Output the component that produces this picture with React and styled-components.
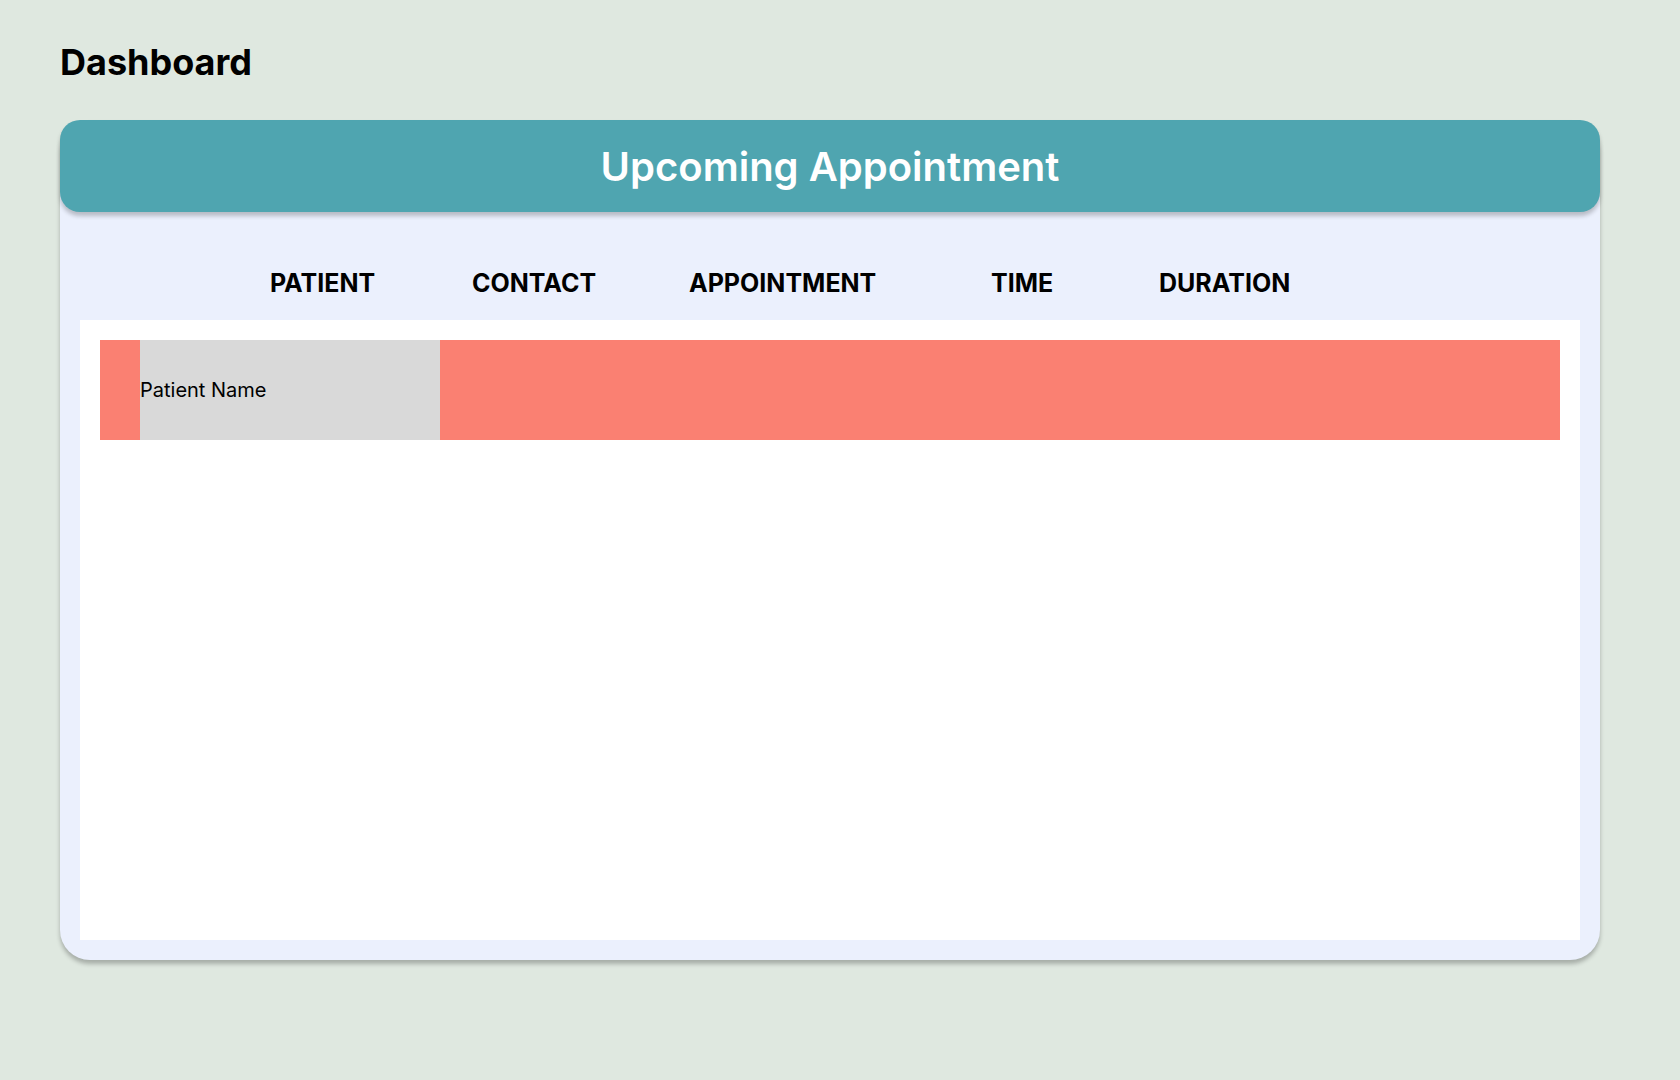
import React from "react";
import styled, { createGlobalStyle } from "styled-components";

const GlobalStyle = createGlobalStyle`
  html, body {
    margin: 0;
    padding: 0;
    background: #dfe8e0;
    font-family: Inter, "Noto Sans", sans-serif;
    color: #000;
  }
  * { box-sizing: border-box; }
`;

const Page = styled.div`
  width: 1680px;
  min-height: 1080px;
  padding: 42px 80px 0 60px;
  display: flex;
  flex-direction: column;
`;

const Title = styled.h1`
  margin: 0;
  font-size: 36px;
  line-height: 40px;
  font-weight: 700;
  height: 40px;
`;

const Card = styled.section`
  margin-top: 38px;
  width: 1540px;
  height: 840px;
  background: #ebf0fd;
  border-radius: 30px;
  box-shadow: 0 4px 4px rgba(0, 0, 0, 0.25);
  display: flex;
  flex-direction: column;
`;

const CardHeader = styled.header`
  height: 92px;
  background: #4fa5b0;
  border-radius: 20px;
  box-shadow: 0 4px 4px rgba(0, 0, 0, 0.22);
  display: flex;
  align-items: center;
  justify-content: center;
  color: #fff;
  font-size: 40px;
  font-weight: 600;
`;

const ColumnRow = styled.div`
  height: 108px;
  display: grid;
  grid-template-columns: 202px 217px 302px 168px auto;
  align-items: center;
  padding: 34px 0 0 210px;
`;

const ColumnLabel = styled.div`
  font-size: 25px;
  font-weight: 700;
`;

const Panel = styled.div`
  flex: 1;
  margin: 0 20px 20px;
  background: #fff;
  padding: 20px;
`;

const Row = styled.div`
  height: 100px;
  background: #fa8072;
  display: flex;
  padding-left: 40px;
`;

const NameCell = styled.div`
  width: 300px;
  background: #d9d9d9;
  display: flex;
  align-items: center;
  font-size: 20px;
`;

const columns = ["PATIENT", "CONTACT", "APPOINTMENT", "TIME", "DURATION"];

export default function App() {
  return (
    <>
      <GlobalStyle />
      <Page>
        <Title>Dashboard</Title>
        <Card>
          <CardHeader>Upcoming Appointment</CardHeader>
          <ColumnRow>
            {columns.map((c) => (
              <ColumnLabel key={c}>{c}</ColumnLabel>
            ))}
          </ColumnRow>
          <Panel>
            <Row>
              <NameCell>Patient Name</NameCell>
            </Row>
          </Panel>
        </Card>
      </Page>
    </>
  );
}
